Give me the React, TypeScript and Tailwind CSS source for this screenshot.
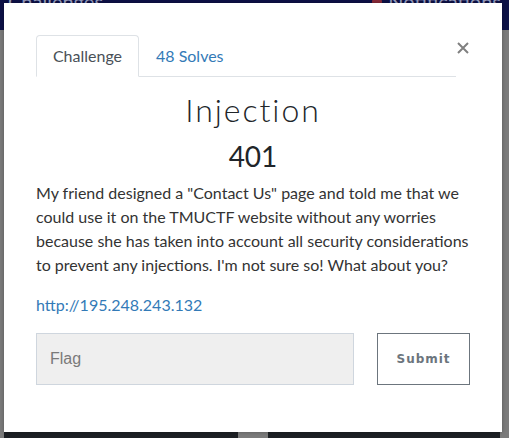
export default function App() {
  return (
    <div className="relative h-[438px] w-[509px] overflow-hidden bg-[#7b7b7b] font-['Lato','Noto_Sans',sans-serif]">
      {/* page behind the dimmed backdrop */}
      <div className="flex h-[30px] items-start justify-between bg-[#0d1147] px-[8px] text-[20px] leading-[10px] text-[#9aa0c0]">
        <span className="-mt-[4px]">Challenges</span>
        <span className="-mt-[4px] flex items-start gap-[6px]">
          <span className="mt-[2px] inline-block h-[8px] w-[10px] rounded-full bg-[#8a2a3a]" />
          Notifications
        </span>
      </div>
      <div className="absolute bottom-0 left-0 flex h-[6px] w-full">
        <div className="ml-[4px] w-[234px] bg-[#1d2024]" />
        <div className="w-[30px]" />
        <div className="w-[232px] bg-[#1d2024]" />
      </div>

      {/* modal */}
      <div className="absolute left-[4px] top-[3px] h-[429px] w-[498px] bg-white px-[32px] pt-[32px] shadow-[0_0_4px_rgba(0,0,0,0.3)]">
        <div className="flex items-start">
          <nav className="flex flex-1 border-b border-[#dee2e6]">
            <div className="-mb-px flex h-[42px] w-[103px] items-center justify-center rounded-t-[4px] border border-b-white border-[#dee2e6] bg-white text-[16px] text-[#495057]">
              Challenge
            </div>
            <div className="flex h-[41px] items-center px-[17px] text-[16px] text-[#337ab7]">48 Solves</div>
          </nav>
          <button className="mt-[6px] flex h-[14px] w-[14px] items-center justify-end">
            <svg width="12" height="12" viewBox="0 0 12 12" className="mr-[1px]">
              <path d="M1 1 L11 11 M11 1 L1 11" stroke="#808080" strokeWidth="2" />
            </svg>
          </button>
        </div>

        <h1 className="mt-[14px] text-center text-[32px] font-light leading-[38px] tracking-[0.06em] text-[#212529]">
          Injection
        </h1>
        <h2 className="mt-[10px] text-center text-[28px] leading-[34px] text-[#212529]">401</h2>

        <p className="mt-[8px] text-[16px] leading-[24px] text-[#333333]">
          My friend designed a "Contact Us" page and told me that we could use it on the TMUCTF website without any
          worries because she has taken into account all security considerations to prevent any injections. I'm not
          sure so! What about you?
        </p>
        <p className="mt-[16px] text-[16px] leading-[24px]">
          <a className="text-[#337ab7]">http://195.248.243.132</a>
        </p>

        <div className="mt-[16px] flex gap-[23px]">
          <input
            placeholder="Flag"
            className="h-[52px] w-[318px] border border-[#cfd6de] bg-[#efefef] px-[13px] font-['Liberation_Sans',Arial,sans-serif] text-[16px] text-[#495057] placeholder:text-[#7a7a7a] focus:outline-none"
          />
          <button className="h-[52px] w-[93px] border border-[#6c757d] bg-white font-['DejaVu_Sans',sans-serif] text-[12px] font-bold tracking-[0.08em] text-[#6c757d]">
            Submit
          </button>
        </div>
      </div>
    </div>
  );
}
